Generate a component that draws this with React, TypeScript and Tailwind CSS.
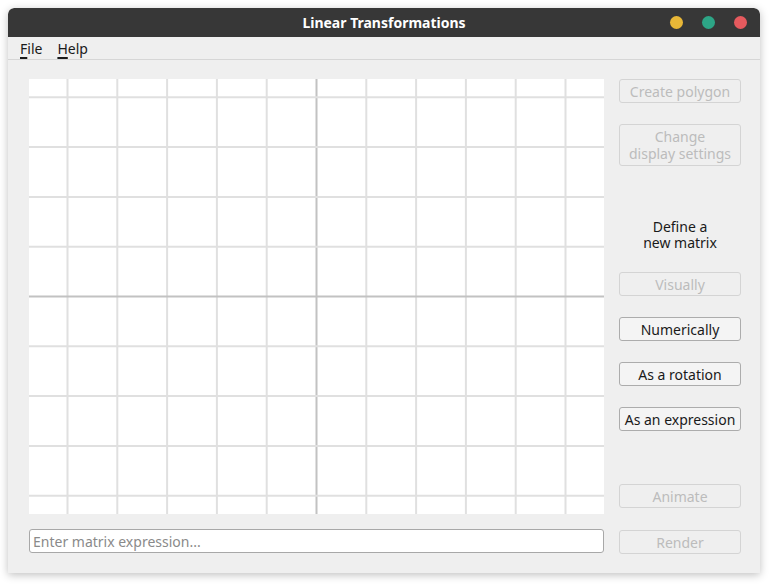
import React from "react";

const font = { fontFamily: '"Noto Sans", "Open Sans", sans-serif' };

function Grid() {
  const w = 575;
  const h = 435;
  const cx = 287.5;
  const cy = 217.5;
  const step = 49.8;
  const vs: number[] = [];
  for (let k = -6; k <= 6; k++) {
    const x = cx + k * step;
    if (x > 0 && x < w) vs.push(x);
  }
  const hs: number[] = [];
  for (let k = -5; k <= 5; k++) {
    const y = cy + k * step;
    if (y > 0 && y < h) hs.push(y);
  }
  return (
    <svg width={w} height={h} className="block bg-white">
      {vs.map((x, i) => (
        <line
          key={"v" + i}
          x1={x}
          x2={x}
          y1={0}
          y2={h}
          stroke={Math.abs(x - cx) < 1 ? "#c2c2c2" : "#e0e0e0"}
          strokeWidth={2}
        />
      ))}
      {hs.map((y, i) => (
        <line
          key={"h" + i}
          x1={0}
          x2={w}
          y1={y}
          y2={y}
          stroke={Math.abs(y - cy) < 1 ? "#c2c2c2" : "#e0e0e0"}
          strokeWidth={2}
        />
      ))}
    </svg>
  );
}

function Btn({
  children,
  disabled,
  className = "",
}: {
  children: React.ReactNode;
  disabled?: boolean;
  className?: string;
}) {
  return (
    <div
      className={
        "w-[122px] flex items-center justify-center text-center rounded-[3px] border text-[14px] leading-[17px] " +
        (disabled
          ? "border-[#d4d4d4] bg-[#efefef] text-[#bcbcbc] "
          : "border-[#acacac] bg-[#f4f4f4] text-[#1a1a1a] ") +
        className
      }
    >
      {children}
    </div>
  );
}

export default function App() {
  return (
    <div className="w-[770px] h-[584px] bg-white relative" style={font}>
      <div className="absolute left-[8px] top-[8px] w-[752px] h-[565px] bg-[#efefef] rounded-t-[6px] shadow-[0_2px_8px_rgba(0,0,0,0.25)] flex flex-col overflow-hidden">
        <div className="h-[29px] bg-[#373737] rounded-t-[6px] relative flex items-center justify-center">
          <span className="text-white text-[14px] font-bold">Linear Transformations</span>
          <div className="absolute right-[13px] top-[8px] flex gap-[19px]">
            <div className="w-[13px] h-[13px] rounded-full bg-[#e8b737]" />
            <div className="w-[13px] h-[13px] rounded-full bg-[#2da586]" />
            <div className="w-[13px] h-[13px] rounded-full bg-[#e55a5e]" />
          </div>
        </div>
        <div className="h-[23px] border-b border-[#d6d6d6] flex items-center pl-[12px] gap-[15px] text-[14px] text-[#1a1a1a]">
          <span>
            <span className="underline decoration-2 underline-offset-[3px]">F</span>ile
          </span>
          <span>
            <span className="underline decoration-2 underline-offset-[3px]">H</span>elp
          </span>
        </div>
        <div className="pl-[21px] pt-[19px] flex flex-col">
          <div className="flex gap-[15px]">
            <Grid />
            <div className="flex flex-col">
              <Btn disabled className="h-[24px]">Create polygon</Btn>
              <Btn disabled className="h-[42px] mt-[21px]">
                Change
                <br />
                display settings
              </Btn>
              <div className="mt-[53px] h-[32px] w-[122px] text-center text-[14px] leading-[16px] text-[#1a1a1a]">
                Define a
                <br />
                new matrix
              </div>
              <Btn disabled className="h-[24px] mt-[21px]">Visually</Btn>
              <Btn className="h-[24px] mt-[21px]">Numerically</Btn>
              <Btn className="h-[24px] mt-[21px]">As a rotation</Btn>
              <Btn className="h-[24px] mt-[21px]">As an expression</Btn>
              <Btn disabled className="h-[24px] mt-[53px]">Animate</Btn>
            </div>
          </div>
          <div className="flex gap-[15px] mt-[15px] items-start">
            <div className="w-[575px] h-[24px] bg-white border border-[#a8a8a8] rounded-[3px] flex items-center px-[3px] text-[14px] text-[#8a8a8a]">
              Enter matrix expression...
            </div>
            <Btn disabled className="h-[24px] mt-[1px]">Render</Btn>
          </div>
        </div>
      </div>
    </div>
  );
}
